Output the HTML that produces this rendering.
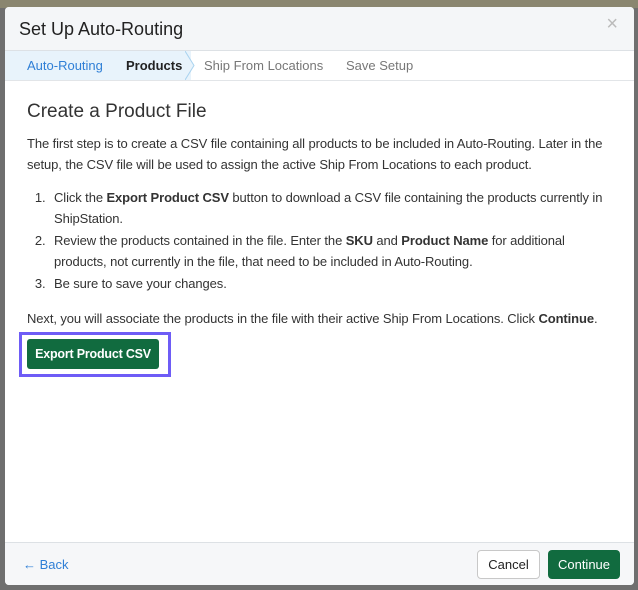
<!DOCTYPE html>
<html><head><style>
body{margin:0;width:638px;height:590px;background:#6f6f6f;position:relative;overflow:hidden;font-family:"Liberation Sans",Arial,sans-serif;}
.topbar{position:absolute;left:0;top:0;width:638px;height:8px;background:#8a8670;}
.modal{position:absolute;left:5px;top:7px;width:629px;height:578px;background:#fff;border-radius:4px;overflow:hidden;}
.hdr{height:43px;background:#f4f6f8;border-bottom:1px solid #dde1e5;position:relative;}
.hdr h1{margin:0;position:absolute;left:14px;top:12px;font-size:18px;font-weight:normal;color:#222;}
.x{position:absolute;right:16px;top:6px;font-size:20px;color:#bbb;}
.tabs{height:29px;background:#fff;border-bottom:1px solid #e2e5e8;position:relative;font-size:13px;}
.tabs .hl{position:absolute;left:0;top:0;width:186px;height:29px;background:#e8f3fb;}
.tabs span{position:absolute;top:7px;}
.body{padding:0 22px;color:#333;font-size:13px;line-height:21.5px;letter-spacing:-0.1px;}
h2{font-weight:normal;font-size:19px;margin:20px 0 10px;color:#333;letter-spacing:0}
ol{margin:11px 0 10px;padding-left:22px;}
ol li{padding-left:5px;font-size:13px}
.btnwrap{position:absolute;left:14px;top:325px;width:152px;height:45px;border:3px solid #6e5cf6;box-sizing:border-box;}
.btn{position:absolute;left:22px;top:332px;width:132px;height:30px;background:#116b3f;color:#fff;border-radius:3px;font-size:12.5px;font-weight:bold;text-align:center;line-height:30px;letter-spacing:-0.2px}
.ftr{position:absolute;left:0;top:535px;width:629px;height:43px;background:#f6f7f9;border-top:1px solid #dde1e5;}
</style></head><body>
<div class="topbar"></div>
<div class="modal">
<div class="hdr"><h1>Set Up Auto-Routing</h1><div class="x">×</div></div>
<div class="tabs"><div class="hl"></div>
<svg style="position:absolute;left:180px;top:0" width="12" height="29"><polyline points="0,0 9,14.5 0,29" fill="#e8f3fb" stroke="#a9d3ef" stroke-width="1"/></svg>
<span style="left:22px;color:#2f7fd6">Auto-Routing</span>
<span style="left:121px;color:#222;font-weight:bold">Products</span>
<span style="left:199px;color:#777">Ship From Locations</span>
<span style="left:341px;color:#777">Save Setup</span></div>
<div class="body">
<h2>Create a Product File</h2>
<div>The first step is to create a CSV file containing all products to be included in Auto-Routing. Later in the setup, the CSV file will be used to assign the active Ship From Locations to each product.</div>
<ol>
<li>Click the <b>Export Product CSV</b> button to download a CSV file containing the products currently in ShipStation.</li>
<li>Review the products contained in the file. Enter the <b>SKU</b> and <b>Product Name</b> for additional products, not currently in the file, that need to be included in Auto-Routing.</li>
<li>Be sure to save your changes.</li>
</ol>
<div style="margin-top:14px">Next, you will associate the products in the file with their active Ship From Locations. Click <b>Continue</b>.</div>
</div>
<div class="btnwrap"></div>
<div class="btn">Export Product CSV</div>
<div class="ftr">
<span style="position:absolute;left:18px;top:14px;color:#2f7fd6;font-size:13px">← Back</span>
<div style="position:absolute;left:472px;top:7px;width:61px;height:27px;border:1px solid #c8c8c8;border-radius:4px;background:#fff;text-align:center;line-height:27px;font-size:13px;color:#222">Cancel</div>
<div style="position:absolute;left:543px;top:7px;width:72px;height:29px;border-radius:4px;background:#116b3f;text-align:center;line-height:29px;font-size:13px;color:#fff">Continue</div>
</div>
</div>
</body></html>
